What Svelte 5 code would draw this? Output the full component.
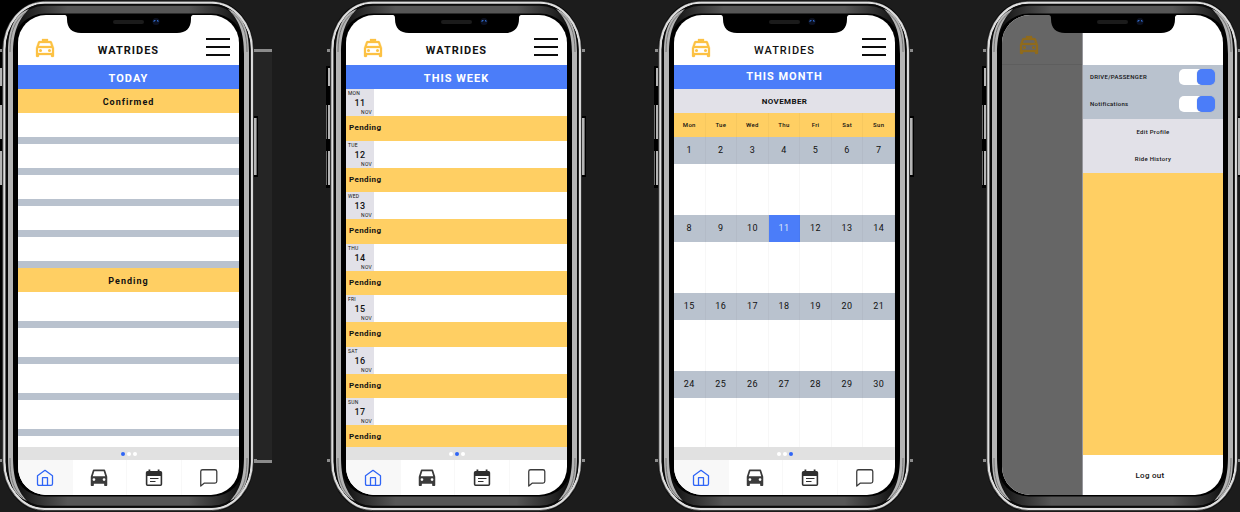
<script>
  const slotsConfirmed = Array(5).fill(0);
  const slotsPending = Array(4).fill(0);
  const week = [
    ['MON', 11], ['TUE', 12], ['WED', 13], ['THU', 14],
    ['FRI', 15], ['SAT', 16], ['SUN', 17],
  ];
  const weekdays = ['Mon', 'Tue', 'Wed', 'Thu', 'Fri', 'Sat', 'Sun'];
  const month = [
    [1, 2, 3, 4, 5, 6, 7],
    [8, 9, 10, 11, 12, 13, 14],
    [15, 16, 17, 18, 19, 20, 21],
    [24, 25, 26, 27, 28, 29, 30],
  ];
  const today = 11;
</script>

{#snippet frame()}
  <svg class="frame" viewBox="0 0 252 512" preserveAspectRatio="none" aria-hidden="true">
    <defs>
      <linearGradient id="band" x1="0" x2="1" y1="0" y2="0">
        <stop offset="0" stop-color="#000" />
        <stop offset="0.1" stop-color="#262626" />
        <stop offset="0.25" stop-color="#565656" />
        <stop offset="0.75" stop-color="#565656" />
        <stop offset="0.9" stop-color="#262626" />
        <stop offset="1" stop-color="#000" />
      </linearGradient>
    </defs>
    <g fill="#8b8b8b">
      <rect x="-3" y="49" width="4" height="3" />
      <rect x="251" y="49" width="4" height="3" />
      <rect x="-3" y="459" width="4" height="3" />
      <rect x="251" y="459" width="4" height="3" />
    </g>
    <g fill="#000">
      <rect x="-4" y="66" width="6" height="122" />
      <rect x="250" y="116" width="6" height="61" />
    </g>
    <g fill="#b5b5b5">
      <rect x="-2" y="68" width="2" height="18" />
      <rect x="-2" y="105" width="2" height="34" />
      <rect x="-2" y="151" width="2" height="34" />
      <rect x="252" y="118" width="2" height="57" />
    </g>
    <g fill="#6d6d6d">
      <rect x="-4" y="105" width="1" height="34" />
      <rect x="-4" y="151" width="1" height="34" />
      <rect x="254" y="118" width="1" height="57" />
    </g>
    <rect x="0" y="0.5" width="252" height="511" rx="42" ry="50" fill="#050505" />
    <rect x="5" y="5" width="242" height="502" rx="38" ry="45" fill="url(#band)" />
    <rect x="0.8" y="1.3" width="250.4" height="509.4" rx="42" ry="49" fill="none" stroke="#4a4a4a" stroke-width="1" />
    <rect x="2.4" y="2.8" width="247.4" height="506" rx="40" ry="47" fill="none" stroke="#dedede" stroke-width="2.3" />
    <rect x="4.8" y="4.800" width="242.8" height="502" rx="38" ry="45" fill="none" stroke="#0a0a0a" stroke-width="2" />
    <rect x="11" y="13.500" width="231" height="483" rx="32" fill="#000" />
    <g fill="#b4b4b4">
      <path d="M6 52C6 28 13 14 27 9C16 20 11 32 11 54V456C11 478 15 490 25 501C12 495 6 484 6 458Z" />
      <path d="M247 52C247 28 240 14 226 9C237 20 242 32 242 54V456C242 478 238 490 228 501C241 495 247 484 247 458Z" />
    </g>
    <g fill="none" stroke="#777" stroke-width="1">
      <path d="M8 52C8 32 13 20 23 13M8 458C8 480 12 490 21 498" />
      <path d="M245 52C245 32 240 20 230 13M245 458C245 480 241 490 232 498" />
    </g>
  </svg>
{/snippet}

{#snippet notch()}
  <svg class="notch" viewBox="0 0 130 20" aria-hidden="true">
    <path d="M0 0H130C127 0 127 2 127 4C127 13 122 18 113 18H17C8 18 3 13 3 4C3 2 3 0 0 0Z" fill="#000" />
    <rect x="49" y="5" width="31" height="4" rx="2" fill="#1b1b1b" />
    <circle cx="92" cy="6.500" r="3.500" fill="#0b1020" />
    <path d="M90 7V5.500H91.500M93 5.500H94V7" fill="none" stroke="#2f66c4" stroke-width="1" />
  </svg>
{/snippet}

{#snippet taxi()}
  <svg class="taxi" viewBox="0 0 24 24" aria-hidden="true">
    <path d="M18.92 6.01C18.72 5.42 18.16 5 17.5 5H15V3H9v2H6.5c-.66 0-1.21.42-1.42 1.01L3 12v8c0 .55.45 1 1 1h1c.55 0 1-.45 1-1v-1h12v1c0 .55.45 1 1 1h1c.55 0 1-.45 1-1v-8l-2.08-5.99zM6.85 7h10.29l1.04 3H5.81l1.04-3zM19 17H5v-5h14v5z" fill="currentColor" stroke="currentColor" stroke-width="0.3" />
    <circle cx="7.500" cy="14.500" r="1.500" fill="currentColor" />
    <circle cx="16.500" cy="14.500" r="1.500" fill="currentColor" />
  </svg>
{/snippet}

{#snippet header(light)}
  <header class="head">
    {@render taxi()}
    <h1 class:light>WATRIDES</h1>
    <button class="burger" aria-label="Menu"><i></i><i></i><i></i></button>
  </header>
{/snippet}

{#snippet footer(page)}
  <div class="dots">
    {#each [0, 1, 2] as n}<i class:on={n === page}></i>{/each}
  </div>
  <nav class="tabs">
    <button class="active" aria-label="Home">
      <svg viewBox="0 0 22 22" fill="none" stroke="#2f65f6" stroke-width="1.3" stroke-linejoin="round">
        <path d="M3.500 8.700L11 3.300L18.500 8.700V16.800Q18.500 18.400 17 18.400H5Q3.500 18.400 3.500 16.800Z" />
        <path d="M8.500 18V10.700H13.500V18" />
      </svg>
    </button>
    <button aria-label="Rides">
      <svg viewBox="0 0 24 24" fill="#3b3b3b">
        <path d="M18.920 4C18.720 3.300 18.160 2.800 17.500 2.800h-11c-.66 0-1.210.5-1.420 1.200L3 10.500v9c0 .8.450 1.300 1 1.300h1.400c.55 0 1-.5 1-1.300v-1.200h11.200v1.200c0 .8.450 1.300 1 1.300h1.400c.55 0 1-.5 1-1.300v-9zM6.500 15.200a1.500 1.500 0 1 1 0-3a1.500 1.500 0 0 1 0 3zm11 0a1.500 1.500 0 1 1 0-3a1.500 1.500 0 0 1 0 3zM5.200 10l1.700-5.500h10.200L18.800 10z" />
      </svg>
    </button>
    <button aria-label="Calendar">
      <svg viewBox="0 0 22 22">
        <path d="M4.500 4H5.500V2.600H7.300V4H14.700V2.600H16.500V4H17.500Q19.200 4 19.200 5.800V17.200Q19.200 19 17.500 19H4.500Q2.800 19 2.800 17.200V5.800Q2.800 4 4.500 4ZM4.400 8.900V17.400H17.600V8.900Z" fill="#303030" fill-rule="evenodd" />
        <path d="M7 11.500H15.500M7 14.500H12.500" stroke="#303030" stroke-width="1.200" />
      </svg>
    </button>
    <button aria-label="Messages">
      <svg viewBox="0 0 24 24" fill="none" stroke="#3b3b3b" stroke-width="1.400" stroke-linejoin="round">
        <path d="M20.500 15.500a2 2 0 0 1-2 2H7l-4 3.300V5a2 2 0 0 1 2-2h13.500a2 2 0 0 1 2 2z" />
      </svg>
    </button>
  </nav>
{/snippet}

<main class="board">
  <section class="phone">
    {@render frame()}
    <div class="screen">
      {@render header(false)}
      <h2 class="title">TODAY</h2>
      <h3 class="group">Confirmed</h3>
      <div class="slots">{#each slotsConfirmed as _}<div class="slot"></div>{/each}</div>
      <h3 class="group">Pending</h3>
      <div class="slots far">{#each slotsPending as _}<div class="slot"></div>{/each}</div>
      {@render footer(0)}
    </div>
    {@render notch()}
  </section>

  <section class="phone">
    {@render frame()}
    <div class="screen">
      {@render header(false)}
      <h2 class="title">THIS WEEK</h2>
      <div class="week">
        {#each week as [name, day]}
          <div class="day">
            <div class="date"><small>{name}</small><b>{day}</b><small class="mon">NOV</small></div>
            <div class="status">Pending</div>
          </div>
        {/each}
      </div>
      {@render footer(1)}
    </div>
    {@render notch()}
  </section>

  <section class="phone">
    {@render frame()}
    <div class="screen">
      {@render header(true)}
      <h2 class="title month-title">THIS MONTH</h2>
      <h3 class="month-name">NOVEMBER</h3>
      <div class="calendar">
        <table>
          <thead>
            <tr>{#each weekdays as d}<th scope="col">{d}</th>{/each}</tr>
          </thead>
          <tbody>
            {#each month as row}
              <tr class="nums">{#each row as d}<td class:today={d === today}>{d}</td>{/each}</tr>
              <tr class="space">{#each row as _}<td></td>{/each}</tr>
            {/each}
          </tbody>
        </table>
      </div>
      {@render footer(2)}
    </div>
    {@render notch()}
  </section>

  <section class="phone">
    {@render frame()}
    <div class="screen drawer-screen">
      <div class="dim"><div class="dim-head">{@render taxi()}</div></div>
      <aside class="drawer">
        <div class="settings">
          <label><span>DRIVE/PASSENGER</span><input type="checkbox" checked /></label>
          <label><span>Notifications</span><input type="checkbox" checked /></label>
        </div>
        <div class="links">
          <button>Edit Profile</button>
          <button>Ride History</button>
        </div>
        <div class="fill"></div>
        <button class="logout">Log out</button>
      </aside>
    </div>
    {@render notch()}
  </section>
</main>

<style>
  :global(body) {
    margin: 0;
    background: #1c1c1c;
  }
  .board {
    display: flex;
    justify-content: space-between;
    padding: 0 2px;
    overflow: hidden;
    font-family: Roboto, sans-serif;
    color: #111;
    background:
      linear-gradient(#8b8b8b, #8b8b8b) 254px 49px / 18px 3px no-repeat,
      linear-gradient(#8b8b8b, #8b8b8b) 254px 460px / 18px 3px no-repeat,
      linear-gradient(#252525, #252525) 250px 49px / 22px 413px no-repeat,
      linear-gradient(#000, #000) 0 0 / 60px 420px no-repeat,
      #1c1c1c;
  }
  .phone {
    position: relative;
    display: flex;
    flex: 0 0 252px;
    box-sizing: border-box;
    padding: 15px 15px 17px 16px;
  }
  .frame {
    position: absolute;
    inset: 0;
    width: 100%;
    height: 100%;
    overflow: visible;
  }
  .notch {
    position: absolute;
    top: 15px;
    left: 62px;
    width: 130px;
    height: 20px;
  }
  .screen {
    position: relative;
    flex: 1;
    display: flex;
    flex-direction: column;
    background: #fff;
    border-radius: 28px;
    overflow: hidden;
  }
  h1, h2, h3 {
    margin: 0;
    text-align: center;
    letter-spacing: 1px;
  }
  button {
    border: 0;
    padding: 0;
    margin: 0;
    background: none;
    font: inherit;
    color: inherit;
    letter-spacing: inherit;
  }
  .head {
    display: grid;
    grid-template-columns: 24px 1fr 24px;
    align-items: center;
    box-sizing: border-box;
    height: 50px;
    padding: 18px 9px 2px 15px;
  }
  .taxi {
    display: block;
    width: 24px;
    height: 24px;
    color: #fcc243;
  }
  h1 {
    font-size: 11px;
    line-height: 14px;
    font-weight: 700;
    padding: 5px 6px 0 0;
  }
  h1.light {
    font-weight: 500;
  }
  .burger {
    display: flex;
    flex-direction: column;
    gap: 6px;
    padding-bottom: 3px;
  }
  .burger i {
    width: 24px;
    height: 2px;
    background: #0c0c0c;
  }
  .title {
    background: #4b7df9;
    color: #fff;
    font-size: 11px;
    line-height: 28px;
    height: 24px;
    font-weight: 700;
  }
  .month-title {
    line-height: 24px;
  }
  .group {
    height: 24px;
    background: #ffcf63;
    font-size: 9px;
    line-height: 26px;
    font-weight: 700;
  }
  .slots {
    height: 155px;
  }
  .slot {
    height: 24px;
    border-bottom: 7px solid #b9c2ce;
  }
  .far .slot {
    height: 29px;
  }
  .dots {
    display: flex;
    justify-content: center;
    align-items: center;
    gap: 2px;
    height: 13px;
    background: #e1e1e1;
  }
  .dots i {
    width: 4px;
    height: 4px;
    border-radius: 50%;
    background: #fff;
  }
  .dots .on {
    background: #2f65f6;
  }
  .tabs {
    display: grid;
    grid-template-columns: repeat(4, 1fr);
    height: 35px;
    padding-right: 3px;
  }
  .tabs button {
    display: flex;
    align-items: center;
    justify-content: center;
    border-right: 1px solid #f8f8f8;
  }
  .tabs button:last-child {
    border-right: 0;
  }
  .tabs .active {
    background: #f8f8f8;
  }
  .tabs svg {
    width: 22px;
    height: 22px;
  }
  .week {
    flex: 1 1 0;
    display: grid;
    grid-template-rows: repeat(6, 1fr) 49px;
  }
  .day {
    display: flex;
    flex-direction: column;
  }
  .date {
    display: flex;
    flex-direction: column;
    box-sizing: border-box;
    width: 28px;
    height: 27px;
    padding: 1px 2px 0;
    background: #e2e1e8;
    line-height: 7px;
  }
  .date small {
    font-size: 5px;
    font-weight: 400;
    letter-spacing: 0.05em;
  }
  .date b {
    font-size: 9px;
    line-height: 12px;
    font-weight: 500;
    letter-spacing: 0.05em;
    text-align: center;
  }
  .date .mon {
    text-align: right;
  }
  .status {
    flex: 1;
    background: #ffcf63;
    padding-left: 3px;
    font-size: 8px;
    line-height: 23px;
    font-weight: 700;
    letter-spacing: 0.05em;
  }
  .month-name {
    height: 24px;
    background: #e2e1e8;
    font-size: 8px;
    line-height: 26px;
    font-weight: 700;
    letter-spacing: 0.05em;
  }
  .calendar {
    flex: 1 1 0;
    overflow: hidden;
  }
  table {
    width: 100%;
    table-layout: fixed;
    border-collapse: separate;
    border-spacing: 0;
    text-align: center;
    letter-spacing: 0.05em;
  }
  th, td {
    box-sizing: border-box;
    padding: 0;
    border-right: 1px solid rgba(0, 0, 0, 0.03);
  }
  th {
    height: 24px;
    background: #ffcf63;
    font-size: 6px;
    line-height: 20px;
    font-weight: 500;
    letter-spacing: 0.05em;
  }
  .nums td {
    height: 27px;
    padding-bottom: 2px;
    background: #b9c2ce;
    font-size: 9px;
    line-height: 22px;
    font-weight: 400;
    letter-spacing: 0.05em;
  }
  .nums .today {
    background: #4b7df9;
    color: #dfe7f8;
  }
  .space td {
    height: 51px;
  }
  .drawer-screen {
    flex-direction: row;
  }
  .dim {
    flex: 0 0 80px;
    border-right: 1px solid #97979c;
    background: #666;
  }
  .dim-head {
    height: 31px;
    padding: 18px 0 0 15px;
    border-bottom: 1px solid #5e5e5e;
  }
  .dim .taxi {
    color: #8f6b1d;
  }
  .drawer {
    flex: 1;
    display: flex;
    flex-direction: column;
    padding-top: 50px;
    font-size: 6px;
    font-weight: 500;
    letter-spacing: 0.05em;
  }
  .settings {
    display: grid;
    grid-template-rows: 26px 28px;
    background: #b9c2ce;
  }
  .settings label {
    display: flex;
    align-items: center;
    justify-content: space-between;
    padding: 0 8px 2px 7px;
  }
  .settings label span {
    padding-bottom: 2px;
  }
  .settings input {
    appearance: none;
    display: flex;
    justify-content: flex-end;
    width: 36px;
    height: 16px;
    margin: 0;
    border-radius: 5px;
    background: #fff;
  }
  .settings input::before {
    content: '';
    width: 18px;
    height: 16px;
    border-radius: 5px;
    background: #4b7df9;
    box-shadow: 0 0 1px #8c98ac;
  }
  .settings input:not(:checked) {
    justify-content: flex-start;
  }
  .links {
    display: grid;
    grid-template-rows: 27px 27px;
    background: #e2e1e8;
  }
  .links button {
    padding-bottom: 2px;
  }
  .fill {
    flex: 1;
    background: #ffcf63;
  }
  .logout {
    height: 40px;
    padding-right: 6px;
    font-size: 8px;
  }
</style>
